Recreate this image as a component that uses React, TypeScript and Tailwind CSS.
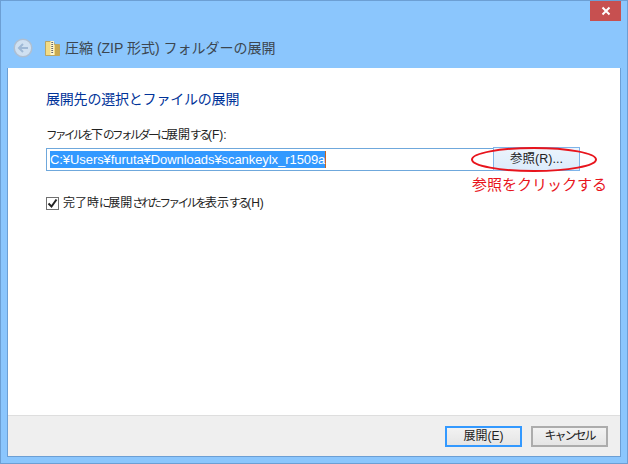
const cjk = "font-['Liberation_Sans','Noto_Sans_CJK_JP',sans-serif]";

// kana in the original UI font is much narrower than kanji
function Narrow({ text, kana }: { text: string; kana: string }) {
  return (
    <>
      {text.split(/([ぁ-ヿ]+)/).map((part, i) =>
        i % 2 === 1 ? (
          <span key={i} className={kana}>
            {part}
          </span>
        ) : (
          part
        )
      )}
    </>
  );
}

function BackIcon() {
  return (
    <svg width="20" height="20" viewBox="0 0 20 20" className="shrink-0">
      <circle cx="10" cy="10" r="8.8" fill="#cfe0f1" stroke="#aebfd2" strokeWidth="1.5" />
      <path d="M15 10H6.5M10 6 6 10l4 4" fill="none" stroke="#9fb9d6" strokeWidth="2" />
    </svg>
  );
}

function ZipIcon() {
  return (
    <svg width="15" height="16" viewBox="0 0 15 16" className="shrink-0">
      <path d="M0.5 1.5h8l1 3h5v11H0.5z" fill="#f3dc86" stroke="#b89a4c" strokeWidth="0.8" />
      <path d="M10 5h4.5v10.5H10z" fill="#c9a94f" />
      <rect x="5.5" y="1" width="3.5" height="14" fill="#fff6cf" />
      <path d="M7.2 2v11" stroke="#666" strokeWidth="1.8" strokeDasharray="1 1" />
    </svg>
  );
}

export default function App() {
  return (
    <div className={`${cjk} w-[628px] h-[464px] bg-[#8bc6fd] border border-[#6c9fd4] flex flex-col relative overflow-hidden`}>
      <div className="flex justify-end pr-[6px]">
        <div className="w-[31px] h-[20px] bg-[#c75050] flex items-center justify-center">
          <svg width="10" height="10" viewBox="0 0 10 10">
            <path d="M1.5 1.5l7 7M8.5 1.5l-7 7" stroke="#fff" strokeWidth="2" />
          </svg>
        </div>
      </div>
      <div className="h-[47px] flex items-end pl-[12px] pb-[10px] gap-[12px]">
        <BackIcon />
        <div className="flex items-center gap-[5px]">
          <ZipIcon />
          <span className="text-[14px] leading-[20px] text-[#3c4650]">圧縮 (ZIP 形式) フォルダーの展開</span>
        </div>
      </div>
      <div className="mx-[6px] mb-[6px] flex-1 flex flex-col border-x border-b border-[#6c9fd4] bg-white">
        <div className="flex-1 pl-[38px] pr-[41px] pt-[20px]">
          <div className="text-[14px] leading-[22px] tracking-[-0.2px] text-[#003399]">展開先の選択とファイルの展開</div>
          <div className="text-[12px] leading-[16px] text-[#222] mt-[17px]">
            <Narrow text="ファイルを下のフォルダーに展開する(F):" kana="text-[11.5px] tracking-[-2.5px]" />
          </div>
          <div className="mt-[5px] h-[23px] border border-[#6fa8dc] flex items-center pl-[3px]">
            <span className="bg-[#3399ff] text-white text-[13px] leading-[17px] tracking-[-0.07px] border-r border-[#c8641e]">C:¥Users¥furuta¥Downloads¥scankeylx_r1509a</span>
          </div>
          <div className="mt-[24px] flex items-center gap-[4px]">
            <div className="w-[13px] h-[13px] border border-[#707070] bg-white flex items-center justify-center">
              <svg width="11" height="11" viewBox="0 0 11 11">
                <path d="M1.5 5.5l3 3 5-7" fill="none" stroke="#222" strokeWidth="2" />
              </svg>
            </div>
            <span className="text-[12px] leading-[16px] text-[#222]">
              <Narrow text="完了時に展開されたファイルを表示する(H)" kana="text-[11.5px] tracking-[-2.4px]" />
            </span>
          </div>
        </div>
        <div className="h-[41px] bg-[#efefef] border-t border-[#dedede] flex items-center justify-end gap-[9px] pr-[12px]">
          <button className="w-[77px] h-[21px] border-2 border-[#3399ff] bg-gradient-to-b from-[#f2f2f2] to-[#e5e5e5] text-[12px] text-[#222] flex items-center justify-center">展開(E)</button>
          <button className="w-[77px] h-[21px] border-2 border-[#acacac] bg-gradient-to-b from-[#f2f2f2] to-[#e5e5e5] text-[12px] tracking-[-2px] text-[#222] flex items-center justify-center">キャンセル</button>
        </div>
      </div>
      <button className="absolute left-[492px] top-[146px] w-[87px] h-[24px] border border-[#7eb4ea] bg-gradient-to-b from-[#ecf4fc] to-[#dcecfc] text-[12.5px] text-[#222] flex items-center justify-center">参照(R)...</button>
      <svg className="absolute left-[469px] top-[145px]" width="130" height="28" viewBox="0 0 130 28">
        <ellipse cx="64" cy="13.5" rx="62" ry="11.5" fill="none" stroke="#e8141c" strokeWidth="2" />
      </svg>
      <span className="absolute left-[471px] top-[174px] text-[15px] leading-[20px] text-[#e8141c]">参照をクリックする</span>
    </div>
  );
}
